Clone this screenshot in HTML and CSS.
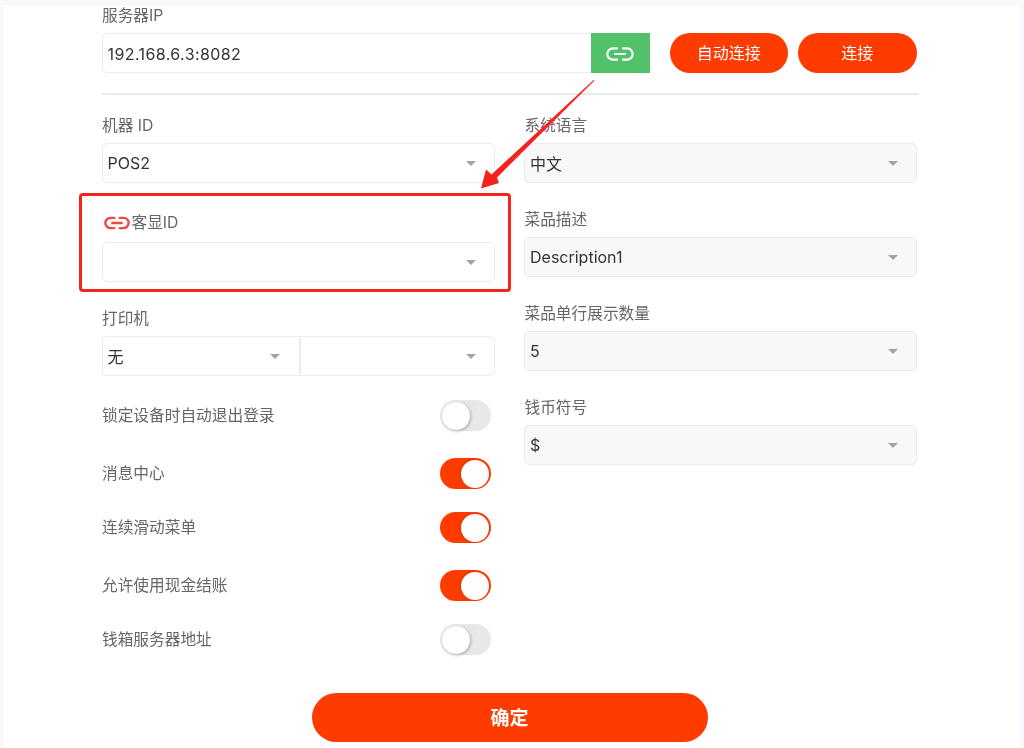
FILE: index.html
```html
<!DOCTYPE html>
<html lang="zh">
<head>
<meta charset="utf-8">
<title>设置</title>
<link rel="stylesheet" href="styles.css">
</head>
<body>
<main class="card">
  <div class="label">服务器IP</div>
  <div class="server-row">
    <div class="server-input">192.168.6.3:8082</div>
    <div class="link-btn">
      <svg class="link-icon" viewBox="0 0 28 14" width="28" height="14" fill="none" stroke="#fff" stroke-width="2.2" stroke-linecap="round"><path d="M11 1.3H7a5.7 5.7 0 0 0 0 11.4h4"/><path d="M17 1.3h4a5.7 5.7 0 0 1 0 11.4h-4"/><path d="M9 7h10"/></svg>
    </div>
    <div class="pill pill-auto">自动连接</div>
    <div class="pill">连接</div>
  </div>
  <div class="divider"></div>
  <div class="columns">
    <section class="col">
      <div class="field">
        <div class="label">机器 ID</div>
        <div class="select"><span>POS2</span><i class="caret"></i></div>
      </div>
      <div class="field field-display">
        <div class="label label-icon">
          <svg class="link-small" viewBox="0 0 28 14" width="26" height="14" fill="none" stroke="#f0483a" stroke-width="2.6" stroke-linecap="round"><path d="M11 1.5H7a5.5 5.5 0 0 0 0 11h4"/><path d="M17 1.5h4a5.500 5.500 0 0 1 0 11h-4"/><path d="M9 7h10"/></svg>
          客显ID
        </div>
        <div class="select"><span></span><i class="caret"></i></div>
      </div>
      <div class="field field-printer">
        <div class="label">打印机</div>
        <div class="select-pair">
          <div class="pair-cell"><span>无</span><i class="caret"></i></div>
          <div class="pair-cell"><span></span><i class="caret"></i></div>
        </div>
      </div>
      <div class="toggle-row row-a"><span>锁定设备时自动退出登录</span><i class="toggle"></i></div>
      <div class="toggle-row row-b"><span>消息中心</span><i class="toggle on"></i></div>
      <div class="toggle-row row-a"><span>连续滑动菜单</span><i class="toggle on"></i></div>
      <div class="toggle-row row-b"><span>允许使用现金结账</span><i class="toggle on"></i></div>
      <div class="toggle-row row-a"><span>钱箱服务器地址</span><i class="toggle"></i></div>
    </section>
    <section class="col">
      <div class="field">
        <div class="label">系统语言</div>
        <div class="select filled"><span>中文</span><i class="caret"></i></div>
      </div>
      <div class="field">
        <div class="label">菜品描述</div>
        <div class="select filled"><span>Description1</span><i class="caret"></i></div>
      </div>
      <div class="field">
        <div class="label">菜品单行展示数量</div>
        <div class="select filled"><span>5</span><i class="caret"></i></div>
      </div>
      <div class="field">
        <div class="label">钱币符号</div>
        <div class="select filled"><span>$</span><i class="caret"></i></div>
      </div>
    </section>
  </div>
  <div class="confirm">确定</div>
</main>
<div class="highlight"></div>
<svg class="arrow" viewBox="0 0 1024 748" width="1024" height="748"><polygon fill="#f5231c" points="594.500,80.500 497,177.500 499,183 481,188.500 486,169.500 491.500,174.500 593.500,80"/></svg>
</body>
</html>
```
FILE: styles.css
```css
* { box-sizing: border-box; }
html, body { margin: 0; height: 748px; overflow: hidden; }
body {
  background: #f7f9fc;
  font-family: "Inter", "Noto Sans CJK SC", sans-serif;
  color: #333;
  padding: 5px 4.5px 0 3px;
  position: relative;
}
.card {
  background: #fff;
  height: 743px;
  padding: 0 102px 0 98.5px;
  box-shadow: 0 0 1px #e4e8ef;
  filter: blur(0.45px);
}
.label {
  height: 20px;
  line-height: 22px;
  padding-left: .5px;
  font-size: 15.7px;
  color: #666;
  margin-bottom: 8px;
}
.server-row { display: flex; height: 40px; }
.server-input {
  width: 489px;
  border: 1px solid #ebebeb;
  border-right: 0;
  border-radius: 5px 0 0 5px;
  padding-left: 5px;
  line-height: 40px;
  font-size: 16px;
  letter-spacing: .4px;
}
.link-btn {
  width: 59px;
  padding-top: 2px;
  background: #52c26a;
  display: flex;
  align-items: center;
  justify-content: center;
}
.pill {
  width: 118.5px;
  margin-left: 10px;
  border-radius: 20px;
  background: #ff3b00;
  color: #fff;
  font-size: 16px;
  line-height: 41px;
  text-align: center;
}
.pill-auto { margin-left: 20px; }
.divider { height: 2px; margin-top: 20px; background: #e6e9ee; }
.columns {
  display: grid;
  grid-template-columns: 393px 393px;
  column-gap: 29.5px;
  margin-top: 20px;
}
.field { margin-bottom: 26px; }
.select, .select-pair {
  height: 40px;
  border: 1px solid #ebebeb;
  border-radius: 5px;
  font-size: 16px;
}
.select {
  display: flex;
  align-items: center;
  justify-content: space-between;
  padding: 0 18px 0 5px;
}
.filled { background: #f8f8f8; }
.caret {
  width: 0;
  height: 0;
  border-left: 5px solid transparent;
  border-right: 5px solid transparent;
  border-top: 5px solid #a3a3a3;
}
.field-display { margin-top: 30px; }
.label-icon {
  display: flex;
  align-items: center;
  gap: 2px;
  margin-bottom: 9px;
  padding-left: 2px;
}
.field-printer { margin-bottom: 24px; }
.select-pair { display: flex; }
.pair-cell {
  flex: 1;
  display: flex;
  align-items: center;
  justify-content: space-between;
  padding: 0 18px 0 5px;
}
.pair-cell:first-child { flex: 0 0 196px; padding-right: 19px; }
.pair-cell + .pair-cell { border-left: 2px solid #ebebeb; }
.toggle-row {
  display: flex;
  align-items: center;
  justify-content: space-between;
  height: 31px;
  padding: 0 4px 0 .5px;
  font-size: 15.7px;
  color: #666;
}
.toggle-row span { margin-bottom: 2px; }
.row-a { margin-top: 23px; }
.row-b { margin-top: 27px; }
.toggle-row:first-of-type { margin-top: 0; }
.toggle {
  width: 51px;
  height: 31px;
  border-radius: 16px;
  background: #e8e8ea;
  display: flex;
  align-items: center;
  justify-content: flex-start;
  padding: 2px;
}
.toggle::after {
  content: "";
  width: 28px;
  height: 28px;
  border-radius: 50%;
  background: #fff;
  box-shadow: 1px 1px 3px rgba(0, 0, 0, .28);
}
.toggle.on { background: #ff3b00; justify-content: flex-end; }
.toggle.on::after { box-shadow: -1px 0 3px rgba(0, 0, 0, .15); }
.confirm {
  width: 396px;
  height: 49px;
  margin: 38px auto 0 210px;
  border-radius: 25px;
  background: #ff3b00;
  color: #fff;
  font-size: 19px;
  font-weight: 700;
  line-height: 51px;
  text-align: center;
}
.highlight {
  position: absolute;
  left: 79px;
  top: 193px;
  width: 432px;
  height: 99px;
  border: 3px solid #f5231c;
  border-radius: 4px;
}
.arrow { position: absolute; left: 0; top: 0; pointer-events: none; }
```
